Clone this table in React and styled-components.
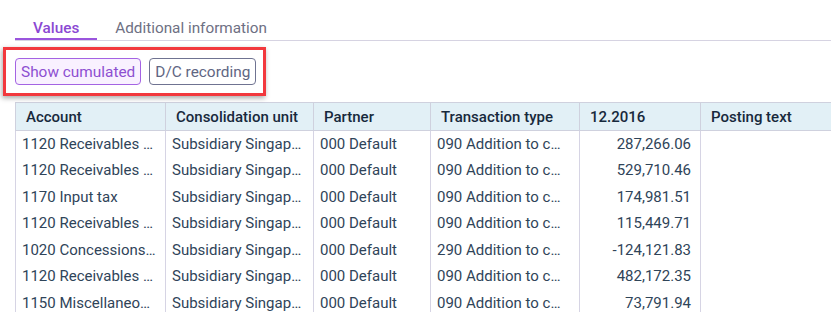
import React from 'react';
import styled, { createGlobalStyle } from 'styled-components';

const GlobalStyle = createGlobalStyle`
  body {
    margin: 0;
    background: #fff;
    font-family: Roboto, "Liberation Sans", Arial, sans-serif;
  }
`;

const Page = styled.div`
  padding-left: 15px;
  padding-top: 12px;
`;

const TabBar = styled.div`
  display: flex;
  border-bottom: 1px solid #d6d3e2;
`;

const Tab = styled.div`
  height: 28px;
  box-sizing: border-box;
  padding: 5px 18px 0;
  display: flex;
  align-items: center;
  font-size: 15.3px;
  font-weight: ${p => (p.active ? 500 : 400)};
  color: ${p => (p.active ? '#8b48d3' : '#6e7083')};
  border-bottom: 2px solid ${p => (p.active ? '#9a55dd' : 'transparent')};
`;

const Toolbar = styled.div`
  position: relative;
  display: flex;
  gap: 8px;
  margin-top: 17px;
`;

const Highlight = styled.div`
  position: absolute;
  left: -12px;
  top: -11px;
  width: 263px;
  height: 49px;
  box-sizing: border-box;
  border: 3px solid #f2383d;
  box-shadow: -1px 2px 5px rgba(0, 0, 0, 0.35);
  pointer-events: none;
`;

const ToggleButton = styled.button`
  height: 27px;
  box-sizing: border-box;
  padding: 0 5px;
  border-radius: 4px;
  font-family: inherit;
  font-size: 15.4px;
  border: 1px solid ${p => (p.active ? '#a463e3' : '#6f7391')};
  background: ${p => (p.active ? '#f9f1ff' : '#fff')};
  color: ${p => (p.active ? '#8d4fd1' : '#5f6683')};
`;

const Table = styled.table`
  margin-top: 17px;
  border-collapse: collapse;
  table-layout: fixed;
  width: 816px;
  font-size: 15px;
`;

const HeadCell = styled.th`
  height: 27px;
  padding: 0 8px 0 10px;
  text-align: left;
  font-weight: 500;
  color: #17293c;
  background: #e2f0f6;
  border: 1px solid #cfd1de;
  white-space: nowrap;
  overflow: hidden;
`;

const Row = styled.tr`
  height: 26.5px;
`;

const Cell = styled.td`
  padding: 0 ${p => p.pr || 9}px 0 6px;
  color: #2f4459;
  white-space: nowrap;
  overflow: hidden;
  text-overflow: ellipsis;
  text-align: ${p => (p.num ? 'right' : 'left')};
  border-left: ${p => (p.last ? 'none' : '1px solid #d6d4e4')};
  border-right: ${p => (p.num ? '1px solid #d6d4e4' : 'none')};
`;

const columns = [
  { title: 'Account', width: 150 },
  { title: 'Consolidation unit', width: 148 },
  { title: 'Partner', width: 117 },
  { title: 'Transaction type', width: 149 },
  { title: '12.2016', width: 121 },
  { title: 'Posting text', width: 131 },
];

const rows = [
  ['1120 Receivables from affiliates', '090 Addition to consolidated', '287,266.06'],
  ['1120 Receivables from affiliates', '090 Addition to consolidated', '529,710.46'],
  ['1170 Input tax', '090 Addition to consolidated', '174,981.51'],
  ['1120 Receivables from affiliates', '090 Addition to consolidated', '115,449.71'],
  ['1020 Concessions and rights', '290 Addition to consolidated', '-124,121.83'],
  ['1120 Receivables from affiliates', '090 Addition to consolidated', '482,172.35'],
  ['1150 Miscellaneous assets', '090 Addition to consolidated', '73,791.94'],
];

function App() {
  return (
    <>
      <GlobalStyle />
      <Page>
        <TabBar>
          <Tab active>Values</Tab>
          <Tab>Additional information</Tab>
        </TabBar>
        <Toolbar>
          <Highlight />
          <ToggleButton active>Show cumulated</ToggleButton>
          <ToggleButton>D/C recording</ToggleButton>
        </Toolbar>
        <Table>
          <colgroup>
            {columns.map(c => (
              <col key={c.title} style={{ width: c.width }} />
            ))}
          </colgroup>
          <thead>
            <tr>
              {columns.map(c => (
                <HeadCell key={c.title}>{c.title}</HeadCell>
              ))}
            </tr>
          </thead>
          <tbody>
            {rows.map(([account, type, value], i) => (
              <Row key={i}>
                <Cell>{account}</Cell>
                <Cell>Subsidiary Singapore</Cell>
                <Cell>000 Default</Cell>
                <Cell pr={16}>{type}</Cell>
                <Cell num>{value}</Cell>
                <Cell last></Cell>
              </Row>
            ))}
          </tbody>
        </Table>
      </Page>
    </>
  );
}

export default App;
